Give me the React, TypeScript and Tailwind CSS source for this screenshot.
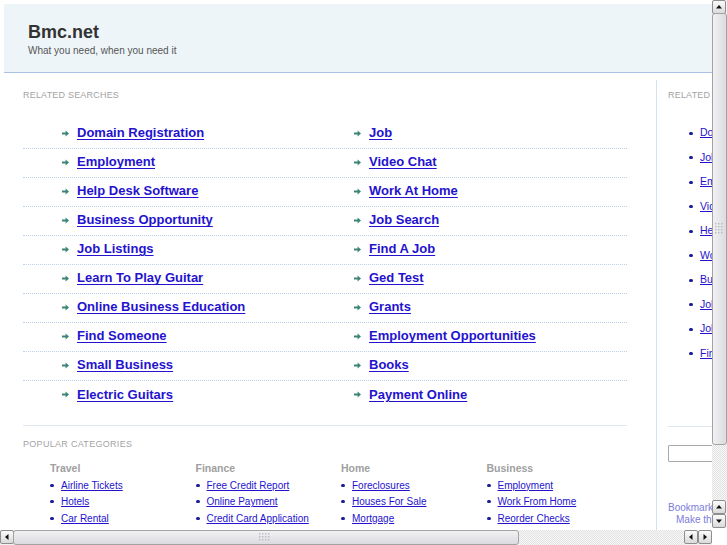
const related: [string, string][] = [
  ['Domain Registration', 'Job'],
  ['Employment', 'Video Chat'],
  ['Help Desk Software', 'Work At Home'],
  ['Business Opportunity', 'Job Search'],
  ['Job Listings', 'Find A Job'],
  ['Learn To Play Guitar', 'Ged Test'],
  ['Online Business Education', 'Grants'],
  ['Find Someone', 'Employment Opportunities'],
  ['Small Business', 'Books'],
  ['Electric Guitars', 'Payment Online'],
];

const categories = [
  { title: 'Travel', links: ['Airline Tickets', 'Hotels', 'Car Rental'] },
  { title: 'Finance', links: ['Free Credit Report', 'Online Payment', 'Credit Card Application'] },
  { title: 'Home', links: ['Foreclosures', 'Houses For Sale', 'Mortgage'] },
  { title: 'Business', links: ['Employment', 'Work From Home', 'Reorder Checks'] },
];

const sidebar = [
  'Domain Registration',
  'Job',
  'Employment',
  'Video Chat',
  'Help Desk Software',
  'Work At Home',
  'Business Opportunity',
  'Job Search',
  'Job Listings',
  'Find A Job',
];

function Arrow() {
  return (
    <svg width="7" height="7" viewBox="0 0 7 7" className="shrink-0">
      <path d="M0 2.6h3.6V0.6L7 3.5 3.6 6.4V4.4H0z" fill="#3a8577" />
    </svg>
  );
}

function Dot() {
  return <span className="w-[4px] h-[3px] rounded-full bg-[#1b1b9a] shrink-0" />;
}

function Grip({ vertical }: { vertical?: boolean }) {
  const cols = vertical ? 3 : 4;
  const rows = vertical ? 4 : 3;
  const dots = [];
  for (let r = 0; r < rows; r++)
    for (let c = 0; c < cols; c++)
      dots.push(<rect key={`${r}-${c}`} x={c * 3} y={r * 3} width="1.4" height="1.4" fill="#b9b9bf" />);
  return (
    <svg width={cols * 3} height={rows * 3}>
      {dots}
    </svg>
  );
}

function Btn({ dir }: { dir: 'up' | 'down' | 'left' | 'right' }) {
  const paths = {
    up: 'M1 5.5L4 2l3 3.5z',
    down: 'M1 2.5L4 6l3-3.5z',
    left: 'M5.5 1L2 4l3.5 3z',
    right: 'M2.5 1L6 4 2.5 7z',
  };
  return (
    <div className="w-[14px] h-[14px] shrink-0 flex items-center justify-center rounded-[2px] border border-[#8e8e8e] bg-gradient-to-b from-[#fbfbfb] to-[#dadada]">
      <svg width="8" height="8" viewBox="0 0 8 8">
        <path d={paths[dir]} fill="#111" />
      </svg>
    </div>
  );
}

const track =
  'bg-[repeating-conic-gradient(#e3e3e3_0_25%,#f7f7f7_0_50%)] bg-[length:2px_2px]';

export default function App() {
  return (
    <div className="w-[727px] h-[545px] overflow-hidden flex flex-col bg-white font-['Liberation_Sans',Arial,sans-serif]">
      <div className="flex h-[530px]">
        <div className="w-[712px] h-[530px] overflow-hidden">
          <div className="w-[900px] pt-[4px] pl-[4px]">
            <div className="h-[69px] bg-[#eef5f9] border-b border-[#a9c1e6] pl-[24px] pt-[17px]">
              <div className="text-[18px] leading-[22px] font-bold text-[#333]">Bmc.net</div>
              <div className="text-[10px] leading-[12px] text-[#555] mt-[2px]">What you need, when you need it</div>
            </div>

            <div className="flex">
              <div className="w-[652px] pl-[19px] pt-[16px]">
                <div className="text-[9px] leading-[12px] tracking-[0.2px] text-[#a3a3a3] uppercase">Related Searches</div>
                <div className="w-[604px] mt-[19px]">
                  {related.map(([a, b], i) => (
                    <div
                      key={a}
                      className={`flex h-[29px] pb-[2px] ${i < related.length - 1 ? 'border-b border-dotted border-[#bcd0ea]' : ''}`}
                    >
                      <div className="w-[292px] pl-[39px] flex items-center gap-[8px]">
                        <Arrow />
                        <a href="#" className="text-[13px] font-bold text-[#2412cf] underline underline-offset-2">
                          {a}
                        </a>
                      </div>
                      <div className="pl-[39px] flex items-center gap-[8px]">
                        <Arrow />
                        <a href="#" className="text-[13px] font-bold text-[#2412cf] underline underline-offset-2">
                          {b}
                        </a>
                      </div>
                    </div>
                  ))}
                </div>
                <div className="w-[604px] mt-[15px] border-t border-[#dfe8f1] pt-[12px]">
                  <div className="text-[9px] leading-[12px] tracking-[0.3px] text-[#a3a3a3] uppercase">Popular Categories</div>
                  <div className="flex pl-[27px] mt-[11px]">
                    {categories.map((c) => (
                      <div key={c.title} className="w-[145.5px] shrink-0">
                        <div className="text-[10.5px] leading-[14px] font-bold text-[#a0a0a0]">{c.title}</div>
                        <div className="mt-[2px]">
                          {c.links.map((l) => (
                            <div key={l} className="h-[16.5px] flex items-center gap-[7px]">
                              <Dot />
                              <a href="#" className="text-[10px] text-[#2412cf] underline">
                                {l}
                              </a>
                            </div>
                          ))}
                        </div>
                      </div>
                    ))}
                  </div>
                </div>
              </div>

              <div className="w-[220px] mt-[7px] h-[460px] border-l border-[#d6e1f0] pl-[11px] pt-[9px]">
                <div className="text-[9px] leading-[12px] tracking-[0.2px] text-[#a3a3a3] uppercase">Related Searches</div>
                <div className="mt-[20px] pl-[21px]">
                  {sidebar.map((s, i) => (
                    <div key={i} className="h-[24.5px] flex items-center gap-[7px]">
                      <Dot />
                      <a href="#" className="text-[10.5px] text-[#2412cf] underline whitespace-nowrap">
                        {s}
                      </a>
                    </div>
                  ))}
                </div>
                <div className="mt-[60px] border-t border-[#dfe8f1]" />
                <input
                  className="mt-[18px] w-[160px] h-[17px] border border-[#a8a8a8] rounded-[1px] bg-white"
                  aria-label="search"
                />
                <div className="mt-[36px] text-[10px] leading-[12px] text-[#7b7bdc] whitespace-nowrap">Bookmark this page</div>
                <div className="pl-[8px] text-[10px] leading-[12px] text-[#7b7bdc] whitespace-nowrap">Make this your homepage</div>
              </div>
            </div>
          </div>
        </div>

        <div className="w-[15px] h-[528px] flex flex-col bg-[#f2f2f2]">
          <Btn dir="up" />
          <div className="h-[432px] rounded-[3px] border border-[#a3a3a6] bg-gradient-to-r from-[#f1f1f4] to-[#dcdce0] flex items-center justify-center -mt-px">
            <Grip vertical />
          </div>
          <div className={`flex-1 ${track}`} />
          <Btn dir="up" />
          <Btn dir="down" />
        </div>
      </div>

      <div className="flex h-[15px]">
        <div className="w-[712px] flex bg-[#f2f2f2]">
          <Btn dir="left" />
          <div className="w-[506px] rounded-[3px] border border-[#a3a3a6] bg-gradient-to-b from-[#f1f1f4] to-[#dcdce0] flex items-center -ml-px">
            <div className="ml-[245px]">
              <Grip />
            </div>
          </div>
          <div className={`flex-1 ${track}`} />
          <Btn dir="left" />
          <Btn dir="right" />
        </div>
        <div className="w-[15px] bg-white" />
      </div>
    </div>
  );
}
